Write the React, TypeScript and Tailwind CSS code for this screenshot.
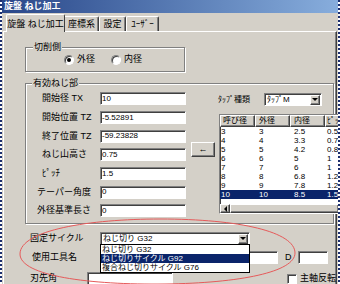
import React from "react";

const SUNKEN =
  "border border-t-[#808080] border-l-[#808080] border-r-white border-b-white shadow-[inset_1px_1px_0_#404040]";
const RAISED =
  "border border-t-white border-l-white border-r-[#404040] border-b-[#404040] shadow-[inset_-1px_-1px_0_#808080]";
const ETCHED =
  "border border-[#808080] shadow-[1px_1px_0_#ffffff,inset_1px_1px_0_#ffffff]";

function Input({ cls, value }: { cls: string; value?: string }) {
  return (
    <div
      className={`h-[13px] shrink-0 bg-white ${SUNKEN} ${cls} flex items-center pl-[1px] text-[8px] overflow-hidden whitespace-nowrap`}
    >
      {value}
    </div>
  );
}

function Radio({ checked }: { checked?: boolean }) {
  return (
    <div className="w-[10px] h-[10px] shrink-0 rounded-full bg-white border border-t-[#808080] border-l-[#808080] border-r-white border-b-white shadow-[inset_1px_1px_0_#404040] flex items-center justify-center">
      {checked && <div className="w-[4px] h-[4px] rounded-full bg-black" />}
    </div>
  );
}

function DropBtn() {
  return (
    <div
      className={`w-[10px] h-[10px] shrink-0 bg-[#d4d0c8] ${RAISED} flex items-center justify-center`}
    >
      <div className="w-0 h-0 border-l-[3px] border-r-[3px] border-t-[3px] border-l-transparent border-r-transparent border-t-black" />
    </div>
  );
}

const rows = [
  ["3", "3", "2.5", "0.5"],
  ["4", "4", "3.3", "0.7"],
  ["5", "5", "4.2", "0.8"],
  ["6", "6", "5", "1"],
  ["7", "7", "6", "1"],
  ["8", "8", "6.8", "1.25"],
  ["9", "9", "7.8", "1.25"],
  ["10", "10", "8.5", "1.5"],
];

const fields: { label: string; pad: string; value: string }[] = [
  { label: "開始径 TX", pad: "pl-[16px]", value: "10" },
  { label: "開始位置 TZ", pad: "pl-[16px]", value: "-5.52891" },
  { label: "終了位置 TZ", pad: "pl-[16px]", value: "-59.23828" },
  { label: "ねじ山高さ", pad: "pl-[16px]", value: "0.75" },
  { label: "ﾋﾟｯﾁ", pad: "pl-[16px]", value: "1.5" },
  { label: "テーパー角度", pad: "pl-[11px]", value: "0" },
  { label: "外径基準長さ", pad: "pl-[11px]", value: "0" },
];

export default function App() {
  return (
    <div className="relative w-[340px] h-[284px] overflow-hidden bg-[#d4d0c8] text-black font-['Liberation_Sans','Noto_Sans_CJK_JP',sans-serif] text-[9px] leading-none select-none">
      {/* title bar */}
      <div className="h-[13px] flex items-center pl-[4px] bg-linear-to-r from-[#2a4789] to-[#88aedd] text-white font-bold text-[9px]">
        旋盤 ねじ加工
      </div>

      {/* tabs */}
      <div className="h-[18px] flex items-end pl-[6px]">
        <div className="relative z-10 -mb-px h-[18px] w-[59px] bg-[#d4d0c8] border-l border-t border-white border-r border-r-[#404040] rounded-t-[2px] flex items-center justify-center pt-[1px]">
          旋盤 ねじ加工
        </div>
        <div className="h-[15px] w-[34px] border-t border-white border-r border-r-[#404040] shadow-[inset_-1px_0_0_#808080] rounded-tr-[2px] flex items-center justify-center pt-[1px]">
          座標系
        </div>
        <div className="h-[15px] w-[27px] border-l border-t border-white border-r border-r-[#404040] shadow-[inset_-1px_0_0_#808080] rounded-t-[2px] flex items-center justify-center pt-[1px]">
          設定
        </div>
        <div className="h-[15px] w-[33px] border-l border-t border-white border-r border-r-[#404040] shadow-[inset_-1px_0_0_#808080] rounded-t-[2px] flex items-center justify-center pt-[1px]">
          ﾕｰｻﾞｰ
        </div>
      </div>

      {/* panel */}
      <div className="ml-[3px] w-[334px] h-[253px] border-t border-l border-white border-r border-r-[#404040] shadow-[inset_-1px_0_0_#808080] flex flex-col">
        {/* group 1 */}
        <div className={`relative mt-[15px] ml-[21px] w-[160px] h-[25px] shrink-0 ${ETCHED}`}>
          <div className="absolute left-[7px] top-[-5px] px-[1px] bg-[#d4d0c8]">切削側</div>
          <div className="h-full flex items-center pl-[38px]">
            <Radio checked />
            <span className="ml-[3px]">外径</span>
            <div className="ml-[16px]">
              <Radio />
            </div>
            <span className="ml-[3px]">内径</span>
          </div>
        </div>

        {/* group 2 */}
        <div className={`relative mt-[11px] ml-[21px] w-[309px] h-[141px] shrink-0 ${ETCHED}`}>
          <div className="absolute left-[6px] top-[-5px] px-[1px] bg-[#d4d0c8]">有効ねじ部</div>
          <div className="flex items-start">
            {/* left column */}
            <div className="flex flex-col pt-[5.5px]">
              {fields.map((f) => (
                <div key={f.label} className="h-[18.7px] flex items-center">
                  <div className={`w-[74px] ${f.pad}`}>{f.label}</div>
                  <Input cls="w-[86px]" value={f.value} />
                </div>
              ))}
            </div>
            {/* arrow button */}
            <div
              className={`mt-[58px] ml-[5px] w-[24px] h-[15px] shrink-0 bg-[#d4d0c8] ${RAISED} flex items-center justify-center text-[9px]`}
            >
              ←
            </div>
            {/* right column */}
            <div className="ml-[3px] mt-[9px] flex flex-col">
              <div className="h-[13px] flex items-center">
                <div className="w-[46px] text-[8px] whitespace-nowrap">ﾀｯﾌﾟ種類</div>
                <div
                  className={`h-[13px] w-[58px] bg-white ${SUNKEN} flex items-center pl-[2px] pr-[1px] text-[8px]`}
                >
                  <span className="flex-1">ﾀｯﾌﾟM</span>
                  <DropBtn />
                </div>
              </div>
              {/* table */}
              <div
                className={`relative z-10 mt-[8px] ml-[1px] w-[121px] h-[100px] bg-white ${SUNKEN} flex flex-col text-[8px] overflow-hidden`}
              >
                <div className="flex h-[12px] shrink-0 whitespace-nowrap">
                  <div className={`w-[35px] shrink-0 bg-[#d4d0c8] ${RAISED} flex items-center pl-[2px]`}>呼び径</div>
                  <div className={`w-[35px] shrink-0 bg-[#d4d0c8] ${RAISED} flex items-center pl-[3px]`}>外径</div>
                  <div className={`w-[35px] shrink-0 bg-[#d4d0c8] ${RAISED} flex items-center pl-[3px]`}>内径</div>
                  <div className={`w-[35px] shrink-0 bg-[#d4d0c8] ${RAISED} flex items-center pl-[1px]`}>ﾋﾟｯﾁ</div>
                </div>
                {rows.map((r, i) => {
                  const sel = i === rows.length - 1;
                  return (
                    <div
                      key={r[0]}
                      className={`flex h-[9px] shrink-0 items-center whitespace-nowrap ${sel ? "bg-[#0a246a] text-white" : ""}`}
                    >
                      <div className="w-[35px] shrink-0 pl-[1px]">{r[0]}</div>
                      <div className="w-[35px] shrink-0 pl-[4px]">{r[1]}</div>
                      <div className="w-[35px] shrink-0 pl-[4px]">{r[2]}</div>
                      <div className="w-[35px] shrink-0 pl-[2px]">{r[3]}</div>
                    </div>
                  );
                })}
                <div className="flex-1" />
                <div className="h-[9px] shrink-0 flex bg-[#ebe9e4]">
                  <div className={`w-[10px] h-[9px] bg-[#d4d0c8] ${RAISED} flex items-center justify-center`}>
                    <div className="w-0 h-0 border-t-[3px] border-b-[3px] border-r-[3px] border-t-transparent border-b-transparent border-r-black" />
                  </div>
                  <div className={`flex-1 h-[9px] bg-[#d4d0c8] ${RAISED}`} />
                </div>
              </div>
            </div>
          </div>
        </div>

        {/* bottom rows */}
        <div className="mt-[8px] h-[13px] flex items-center shrink-0">
          <div className="w-[96px] pl-[26px]">固定サイクル</div>
          <div className="relative z-20">
            <div
              className={`h-[13px] w-[150px] bg-white ${SUNKEN} flex items-center pl-[2px] pr-[1px] text-[8px]`}
            >
              <span className="flex-1">ねじ切り G32</span>
              <DropBtn />
            </div>
            <div className="absolute left-0 top-[12px] w-[150px] h-[29px] bg-white border border-black flex flex-col text-[8px]">
              <div className="h-[9px] flex items-center pl-[1px]">ねじ切り G32</div>
              <div className="h-[9px] flex items-center pl-[1px] bg-[#0a246a] text-white">ねじ切りサイクル G92</div>
              <div className="h-[9px] flex items-center pl-[1px]">複合ねじ切りサイクル G76</div>
            </div>
          </div>
        </div>
        <div className="mt-[6px] h-[13px] flex items-center shrink-0">
          <div className="w-[96px] pl-[28px]">使用工具名</div>
          <Input cls="w-[178px]" />
          <div className="w-[20px] pl-[7px]">D</div>
          <Input cls="w-[30px]" />
        </div>
        <div className="mt-[8px] h-[13px] flex items-center shrink-0">
          <div className="w-[96px] pl-[26px]">刃先角</div>
          <Input cls="w-[86px]" />
          <div className={`ml-[114px] w-[10px] h-[10px] shrink-0 bg-white ${SUNKEN}`} />
          <span className="ml-[3px] whitespace-nowrap">主軸反転</span>
        </div>
      </div>

      {/* red ellipse annotation */}
      <svg
        className="absolute inset-0 z-30 pointer-events-none"
        width="340"
        height="284"
        viewBox="0 0 340 284"
      >
        <path
          d="M20 254 C20 230 90 219 160 219 C240 219 295 232 295 253 C295 272 240 283 165 284 C90 285 20 276 20 254 Z"
          fill="none"
          stroke="#e65a5a"
          strokeWidth="1"
        />
      </svg>

      {/* selection marquee edges */}
      <div className="absolute left-0 top-0 bottom-0 w-[2px] z-40 bg-[repeating-linear-gradient(to_bottom,#1c2f6e_0px,#1c2f6e_2px,#ffffff_2px,#ffffff_4px)]" />
      <div className="absolute right-0 top-0 bottom-0 w-[2px] z-40 bg-[repeating-linear-gradient(to_bottom,#1c2f6e_0px,#1c2f6e_2px,#ffffff_2px,#ffffff_4px)]" />
    </div>
  );
}
